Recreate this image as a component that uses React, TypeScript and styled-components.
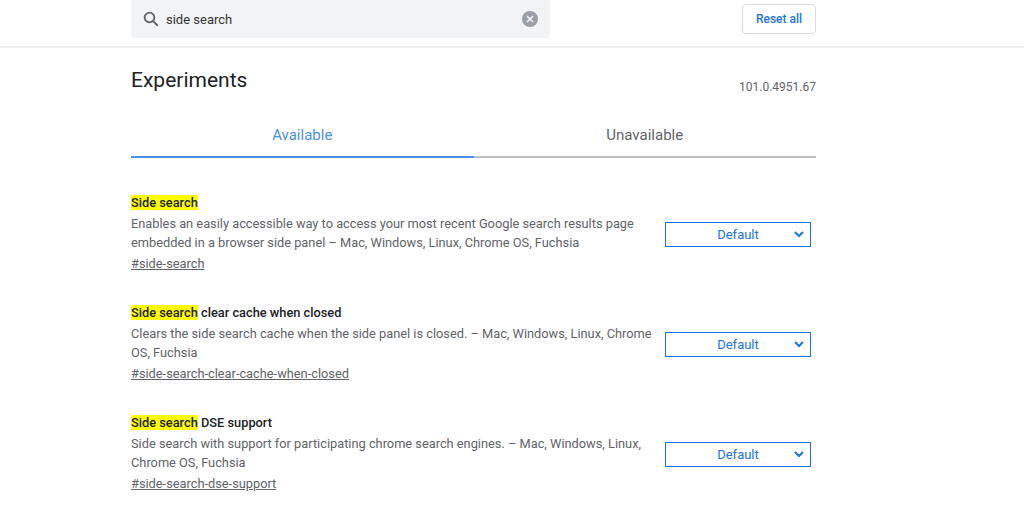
import React from "react";
import styled, { createGlobalStyle } from "styled-components";

const G = createGlobalStyle`
  body { margin: 0; font-family: Roboto, "Liberation Sans", sans-serif; background: #fff; color: #202124; }
`;
const Header = styled.div`
  height: 46px; border-bottom: 2px solid #eceef1; display: flex; padding-left: 131px;
`;
const HeaderInner = styled.div`
  width: 685px; display: flex; justify-content: space-between; align-items: flex-start;
`;
const Search = styled.div`
  width: 419px; height: 38px; background: #f1f3f4; border-radius: 0 0 4px 4px; display: flex; align-items: center;
  padding: 0 12px 0 11px; box-sizing: border-box; gap: 6px; font-size: 13px; color: #333;
`;
const SearchText = styled.span` flex: 1; `;
const Clear = styled.span`
  width: 16px; height: 16px; border-radius: 50%; background: #9aa0a6; display: flex; align-items: center; justify-content: center;
`;
const ResetBtn = styled.button`
  margin-top: 4px; width: 74px; height: 30px; border: 1px solid #dadce0; border-radius: 4px; background: #fff;
  color: #1a73e8; font-family: inherit; font-size: 12px; font-weight: 500;
`;
const Main = styled.div` width: 685px; margin-left: 131px; `;
const TitleRow = styled.div` display: flex; justify-content: space-between; align-items: baseline; padding-top: 20px; `;
const Title = styled.h1` margin: 0; font-size: 21px; font-weight: 400; color: #202124; `;
const Version = styled.span` font-size: 12px; color: #5f6368; position: relative; top: 4px; `;
const Tabs = styled.div` display: flex; margin-top: 34px; border-bottom: 2px solid #bdc1c6; `;
const Tab = styled.div<{ $active?: boolean }>`
  flex: 1; text-align: center; font-size: 15px; padding-bottom: 12px; margin-bottom: -2px;
  color: ${p => (p.$active ? "#4a90e2" : "#5f6368")};
  border-bottom: 2px solid ${p => (p.$active ? "#4a90e2" : "transparent")};
`;
const List = styled.div` padding-top: 34px; display: flex; flex-direction: column; gap: 28px; `;
const Item = styled.div` display: flex; justify-content: space-between; align-items: center; height: 82px; `;
const Info = styled.div` width: 530px; font-size: 12.8px; `;
const Name = styled.div` font-weight: 500; color: #202124; line-height: 18px; `;
const Mark = styled.mark` background: #ffff00; color: inherit; `;
const Desc = styled.div` color: #5f6368; line-height: 19px; margin-top: 2px; `;
const Link = styled.div` color: #5f6368; text-decoration: underline; line-height: 19px; margin-top: 2px; `;
const Select = styled.div`
  width: 146px; height: 25px; border: 1px solid #1a73e8; box-sizing: border-box; margin-right: 5px; margin-top: 3px;
  display: flex; align-items: center; justify-content: center; position: relative; color: #1a73e8; font-size: 13px;
`;
const Chev = styled.svg` position: absolute; right: 6px; top: 8px; `;

const items = [
  { rest: "", desc: "Enables an easily accessible way to access your most recent Google search results page embedded in a browser side panel – Mac, Windows, Linux, Chrome OS, Fuchsia", link: "#side-search" },
  { rest: " clear cache when closed", desc: "Clears the side search cache when the side panel is closed. – Mac, Windows, Linux, Chrome OS, Fuchsia", link: "#side-search-clear-cache-when-closed" },
  { rest: " DSE support", desc: "Side search with support for participating chrome search engines. – Mac, Windows, Linux, Chrome OS, Fuchsia", link: "#side-search-dse-support" },
];

export default function App() {
  return (
    <>
      <G />
      <Header>
        <HeaderInner>
          <Search>
            <svg width="18" height="18" viewBox="0 0 24 24" fill="none" stroke="#5f6368" strokeWidth="2.4"><circle cx="10" cy="10" r="6.5" /><path d="M15 15l6 6" /></svg>
            <SearchText>side search</SearchText>
            <Clear><svg width="8" height="8" viewBox="0 0 8 8" stroke="#f1f3f4" strokeWidth="1.6"><path d="M1 1l6 6M7 1l-6 6" /></svg></Clear>
          </Search>
          <ResetBtn>Reset all</ResetBtn>
        </HeaderInner>
      </Header>
      <Main>
        <TitleRow><Title>Experiments</Title><Version>101.0.4951.67</Version></TitleRow>
        <Tabs><Tab $active>Available</Tab><Tab>Unavailable</Tab></Tabs>
        <List>
          {items.map(it => (
            <Item key={it.link}>
              <Info>
                <Name><Mark>Side search</Mark>{it.rest}</Name>
                <Desc>{it.desc}</Desc>
                <Link>{it.link}</Link>
              </Info>
              <Select>Default
                <Chev width="10" height="7" viewBox="0 0 10 7"><path d="M1 1l4 4 4-4" stroke="#1a73e8" strokeWidth="2" fill="none" /></Chev>
              </Select>
            </Item>
          ))}
        </List>
      </Main>
    </>
  );
}
